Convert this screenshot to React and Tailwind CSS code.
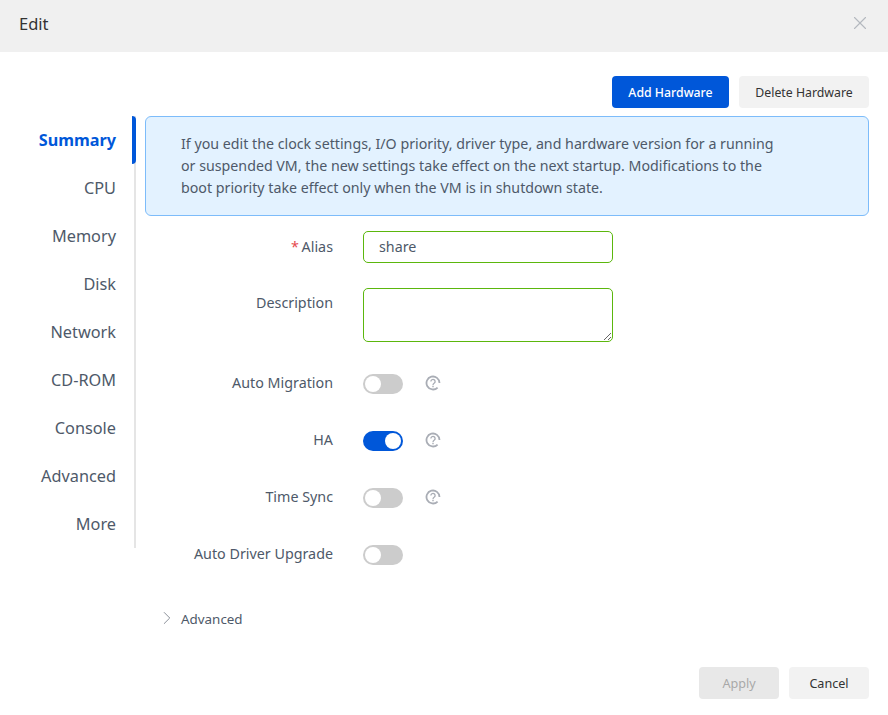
import React from "react";
import { ChevronRight, X } from "lucide-react";

const tabs = ["Summary", "CPU", "Memory", "Disk", "Network", "CD-ROM", "Console", "Advanced", "More"];

const HelpIcon = () => (
    <svg width="16" height="16" viewBox="0 0 16 16" fill="none" stroke="#a9adb5" strokeWidth="1.8" className="-mt-0.5">
        <path d="M12.600 12.600A6.500 6.500 0 1 1 14.500 8" />
        <path d="M5.900 6.500a2.100 2.100 0 1 1 3.400 1.600C8.500 8.700 8 9.100 8 10" strokeWidth="1.300" />
        <path d="M8 10.800v1.500" strokeWidth="1.400" />
    </svg>
);

const Toggle = ({ on }) => (
    <div className={`flex h-5 w-10 items-center rounded-full px-0.5 ${on ? "justify-end bg-[#0057d9]" : "justify-start bg-[#cccccc]"}`}>
        <div className="h-4 w-4 rounded-full bg-white" />
    </div>
);

const SwitchRow = ({ label, on, help, className }) => (
    <div className={`flex h-5 items-center ${className}`}>
        <div className="-mt-[3px] w-[188px] text-right">{label}</div>
        <div className="ml-[30px]">
            <Toggle on={on} />
        </div>
        {help && (
            <div className="ml-[22px]">
                <HelpIcon />
            </div>
        )}
    </div>
);

export default function App() {
    return (
        <div className="flex h-[715px] w-[888px] flex-col bg-white font-['Noto_Sans',sans-serif] text-[14.3px] text-[#4e5969]">
            <div className="flex h-[52px] items-center justify-between bg-[#f0f0f0] pl-[19px] pr-[17px]">
                <span className="-mt-1 text-[16.500px] text-[#333333]">Edit</span>
                <X size={22} strokeWidth={1.2} className="-mt-[7px] text-[#b4b8bf]" />
            </div>

            <div className="mt-6 flex justify-end gap-2.5 pr-[19px]">
                <button className="h-8 w-[117px] rounded bg-[#0057d9] pt-0.5 text-[12.300px] font-medium text-white">Add Hardware</button>
                <button className="h-8 w-[130px] rounded bg-[#f2f2f2] pt-0.5 text-[12.300px] text-[#333333]">Delete Hardware</button>
            </div>

            <div className="mt-2 flex">
                <div className="flex h-[432px] w-[136px] flex-col border-r-2 border-[#e5e5e5]">
                    {tabs.map((t, i) => (
                        <div
                            key={t}
                            className={`-mr-0.5 flex h-12 shrink-0 items-center justify-end rounded-sm border-r-4 pr-4 ${i === 0 ? "border-[#0057d9] text-[16.200px] font-bold text-[#0057d9]" : "border-transparent text-[16.300px]"}`}
                        >
                            {t}
                        </div>
                    ))}
                </div>

                <div className="ml-[9px] w-[724px]">
                    <div className="h-[100px] rounded-md border border-[#7dbcfa] bg-[#e3f2ff] pl-[35px] pr-[90px] pt-[15.500px] text-[14.220px] leading-[22px]">
                        If you edit the clock settings, I/O priority, driver type, and hardware version for a running or suspended VM, the new settings take effect on the next startup. Modifications to the boot priority take effect only when the VM is in shutdown state.
                    </div>

                    <div className="mt-[15px] flex h-8 items-center">
                        <div className="-mt-[1px] w-[188px] text-right">
                            <span className="mr-[-1px] text-[#e5484d]">* </span>Alias
                        </div>
                        <input
                            readOnly
                            value="share"
                            className="ml-[30px] h-8 w-[250px] rounded-[5px] border border-[#5bb70d] pb-0.5 pl-[15px] text-[#4e5969] outline-none"
                        />
                    </div>

                    <div className="mt-[25px] flex">
                        <div className="w-[188px] pt-1 text-right">Description</div>
                        <textarea readOnly className="ml-[30px] h-[54px] w-[250px] rounded-[5px] border border-[#5bb70d] outline-none" />
                    </div>

                    <SwitchRow label="Auto Migration" help className="mt-8" />
                    <SwitchRow label="HA" on help className="mt-[37px]" />
                    <SwitchRow label="Time Sync" help className="mt-[37px]" />
                    <SwitchRow label="Auto Driver Upgrade" className="mt-[37px]" />

                    <div className="mt-[44px] flex h-5 items-center pl-[11px] text-[13.400px]">
                        <ChevronRight size={22} strokeWidth={1} className="-mt-[2px] text-[#80868f]" />
                        <span className="ml-[3px]">Advanced</span>
                    </div>
                </div>
            </div>

            <div className="mt-[38px] flex justify-end gap-2.5 pr-[19px] text-[12.600px]">
                <button className="h-8 w-20 rounded bg-[#e8e8e8] pt-0.5 text-[#a8a8a8]">Apply</button>
                <button className="h-8 w-20 rounded bg-[#f2f2f2] pt-0.5 text-[#333333]">Cancel</button>
            </div>
        </div>
    );
}
